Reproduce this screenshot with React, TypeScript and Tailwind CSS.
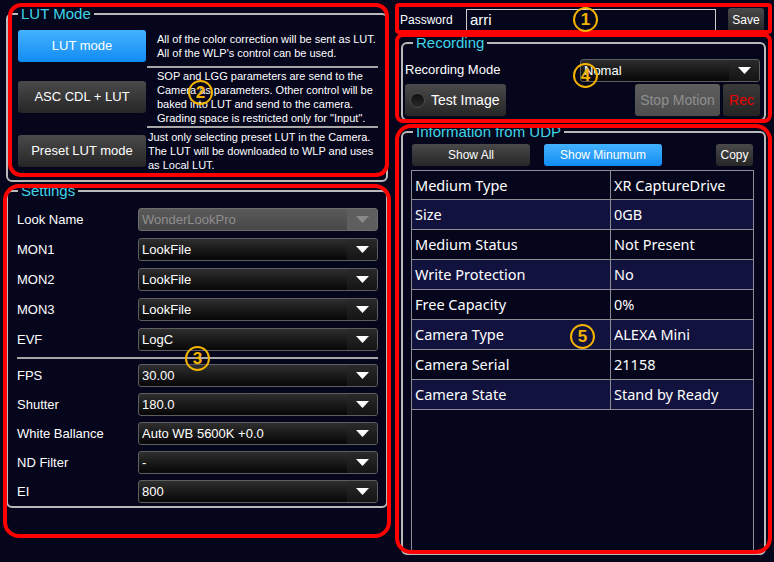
import React from 'react';

const arial = "font-['Liberation_Sans',Arial,sans-serif]";

const Arrow = ({ dim }: { dim?: boolean }) => (
  <svg width="13" height="7" viewBox="0 0 13 7">
    <polygon points="0,0 13,0 6.5,7" fill={dim ? '#8a8a8a' : '#ffffff'} />
  </svg>
);

const Select = ({ value, disabled }: { value: string; disabled?: boolean }) => (
  <div
    className={`flex h-[23px] items-stretch overflow-hidden rounded-[3px] border ${
      disabled
        ? 'border-[#6e6e6e] bg-linear-to-b from-[#5a5a5a] to-[#484848]'
        : 'border-[#5e5e5e] bg-linear-to-b from-[#2f2f2f] to-[#070707]'
    }`}
  >
    <span className={`flex-1 pl-[3px] text-[13px] leading-[21px] ${disabled ? 'text-[#8e8e8e]' : 'text-white'}`}>
      {value}
    </span>
    <span
      className={`flex w-[30px] items-center justify-center ${
        disabled ? 'bg-[#5e5e5e]' : 'bg-linear-to-b from-[#2a2a2a] to-[#141414]'
      }`}
    >
      <Arrow dim={disabled} />
    </span>
  </div>
);

const Btn = ({
  children,
  blue,
  className = '',
}: {
  children: React.ReactNode;
  blue?: boolean;
  className?: string;
}) => (
  <div
    className={`flex items-center justify-center rounded-[3px] text-white ${
      blue
        ? 'bg-linear-to-b from-[#42b2ff] to-[#0c8cf3]'
        : 'bg-linear-to-b from-[#4a4a4a] to-[#262626]'
    } ${className}`}
  >
    {children}
  </div>
);

const Group = ({
  title,
  className = '',
  children,
}: {
  title: string;
  className?: string;
  children: React.ReactNode;
}) => (
  <fieldset className={`rounded-[6px] border-2 border-[#b9b9b9] ${className}`}>
    <legend className="ml-[10px] px-[3px] text-[15px] leading-[18px] text-[#3ed5e6]">{title}</legend>
    {children}
  </fieldset>
);

const Mark = ({ n, className }: { n: string; className: string }) => (
  <div
    className={`pointer-events-none absolute flex h-[25px] w-[25px] items-center justify-center rounded-full border-2 border-[#f3b300] text-[17px] font-bold leading-none text-[#f3b300] ${className}`}
  >
    {n}
  </div>
);

const settingsTop = [
  { label: 'Look Name', value: 'WonderLookPro', disabled: true },
  { label: 'MON1', value: 'LookFile' },
  { label: 'MON2', value: 'LookFile' },
  { label: 'MON3', value: 'LookFile' },
  { label: 'EVF', value: 'LogC' },
];

const settingsBottom = [
  { label: 'FPS', value: '30.00' },
  { label: 'Shutter', value: '180.0' },
  { label: 'White Ballance', value: 'Auto WB 5600K +0.0' },
  { label: 'ND Filter', value: '-' },
  { label: 'EI', value: '800' },
];

const udpRows = [
  ['Medium Type', 'XR CaptureDrive'],
  ['Size', '0GB'],
  ['Medium Status', 'Not Present'],
  ['Write Protection', 'No'],
  ['Free Capacity', '0%'],
  ['Camera Type', 'ALEXA Mini'],
  ['Camera Serial', '21158'],
  ['Camera State', 'Stand by Ready'],
];

export default function App() {
  return (
    <div className={`relative flex h-[562px] w-[774px] overflow-hidden bg-[#05051c] text-white ${arial}`}>
      {/* left column */}
      <div className="w-[394px] shrink-0">
        <Group title="LUT Mode" className="ml-[6px] mt-[5px] w-[382px]">
          <div className="grid grid-cols-[128px_1fr] pb-[6px] pl-[10px] pr-[8px] pt-[3px] text-[11px] leading-[14px]">
            <div className="flex h-[40px] items-center">
              <Btn blue className="h-[32px] w-[128px] text-[13px]">LUT mode</Btn>
            </div>
            <div className="flex items-center whitespace-nowrap pl-[11px]">
              <p>
                All of the color correction will be sent as LUT.
                <br />
                All of the WLP's control can be used.
              </p>
            </div>
            <div />
            <div className="ml-[1px] h-[2px] bg-[#a6a6a6]" />
            <div className="flex h-[58px] items-center">
              <Btn className="h-[32px] w-[128px] text-[13px]">ASC CDL + LUT</Btn>
            </div>
            <div className="flex items-center whitespace-nowrap pl-[11px]">
              <p>
                SOP and LGG parameters are send to the
                <br />
                Camera as parameters. Other control will be
                <br />
                baked into LUT and send to the camera.
                <br />
                Grading space is restricted only for "Input".
              </p>
            </div>
            <div />
            <div className="ml-[1px] h-[2px] bg-[#a6a6a6]" />
            <div className="flex h-[46px] items-center">
              <Btn className="h-[32px] w-[128px] text-[13px]">Preset LUT mode</Btn>
            </div>
            <div className="flex items-center whitespace-nowrap pl-[2px]">
              <p>
                Just only selecting preset LUT in the Camera.
                <br />
                The LUT will be downloaded to WLP and uses
                <br />
                as Local LUT.
              </p>
            </div>
          </div>
        </Group>

        <Group title="Settings" className="ml-[6px] w-[382px]">
          <div className="pb-[3px] pl-[9px] pr-[8px] pt-[8px] text-[13px]">
            <div className="flex flex-col gap-[7px]">
              {settingsTop.map(s => (
                <div key={s.label} className="grid grid-cols-[121px_1fr] items-center">
                  <span>{s.label}</span>
                  <Select value={s.value} disabled={s.disabled} />
                </div>
              ))}
            </div>
            <div className="mb-[5px] mt-[6px] h-[2px] bg-[#a6a6a6]" />
            <div className="flex flex-col gap-[6px]">
              {settingsBottom.map(s => (
                <div key={s.label} className="grid grid-cols-[121px_1fr] items-center">
                  <span>{s.label}</span>
                  <Select value={s.value} />
                </div>
              ))}
            </div>
          </div>
        </Group>
      </div>

      {/* right column */}
      <div className="w-[380px] shrink-0">
        <div className="mt-[8px] flex h-[24px] items-center pl-[6px]">
          <span className="w-[66px] text-[12px]">Password</span>
          <div className="h-[22px] w-[250px] border border-[#cfcfcf] bg-[#05051c] pl-[3px] text-[15px] leading-[20px]">
            arri
          </div>
          <Btn className="ml-[12px] h-[24px] w-[36px] text-[12px]">Save</Btn>
        </div>

        <Group title="Recording" className="ml-[7px] mt-[2px] w-[365px]">
          <div className="pb-[3px] pl-[2px] pr-[4px] pt-[6px]">
            <div className="flex h-[24px] items-center justify-between">
              <span className="text-[13px]">Recording Mode</span>
              <div className="w-[180px]">
                <Select value="Nomal" />
              </div>
            </div>
            <div className="mt-[2px] flex h-[32px]">
              <Btn className="w-[101px] justify-start pl-[5px] text-[14px]">
                <span className="mr-[6px] h-[15px] w-[15px] rounded-full border border-[#4a4a4a] bg-linear-to-b from-[#101010] to-[#2a2a2a]" />
                Test Image
              </Btn>
              <div className="ml-auto flex w-[85px] items-center justify-center rounded-[3px] bg-linear-to-b from-[#5e5e5e] to-[#4e4e4e] text-[14px] text-[#8f8f8f]">
                Stop Motion
              </div>
              <div className="ml-[3px] flex w-[37px] items-center justify-center rounded-[3px] bg-linear-to-b from-[#3a3a3a] to-[#242424] text-[14px] text-[#e80000]">
                Rec
              </div>
            </div>
          </div>
        </Group>

        <Group title="Information from UDP" className="ml-[7px] mt-[2px] w-[365px]">
          <div className="pb-[2px] pt-[3px]">
            <div className="flex h-[22px] text-[12px]">
              <Btn className="ml-[9px] w-[118px]">Show All</Btn>
              <Btn blue className="ml-[14px] w-[118px]">Show Minumum</Btn>
              <Btn className="ml-auto mr-[11px] w-[37px]">Copy</Btn>
            </div>
            <div className="ml-[8px] mr-[10px] mt-[4px] h-[381px] border-x border-[#8d8d95] font-['Noto_Sans','Open_Sans',sans-serif] text-[14.5px]">
              {udpRows.map(([k, v], i) => (
                <div
                  key={k}
                  className={`grid h-[30px] grid-cols-[199px_1fr] border-b border-[#8d8d95] ${i === 0 ? 'border-t' : ''} ${
                    i % 2 === 1 ? 'bg-[#12123f]' : 'bg-[#05051c]'
                  }`}
                >
                  <span className="border-r border-[#8d8d95] pl-[3px] leading-[28px]">{k}</span>
                  <span className="pl-[3px] leading-[28px]">{v}</span>
                </div>
              ))}
            </div>
          </div>
        </Group>
      </div>

      {/* red annotation frames */}
      <div className="pointer-events-none absolute left-[8px] top-[3px] h-[174px] w-[381px] rounded-[13px] border-4 border-[#ff0000]" />
      <div className="pointer-events-none absolute left-[3px] top-[184px] h-[354px] w-[388px] rounded-[16px] border-4 border-[#ff0000]" />
      <div className="pointer-events-none absolute left-[395px] top-[3px] h-[31px] w-[377px] rounded-[4px] border-4 border-[#ff0000]" />
      <div className="pointer-events-none absolute left-[395px] top-[33px] h-[90px] w-[377px] rounded-[8px] border-4 border-[#ff0000]" />
      <div className="pointer-events-none absolute left-[395px] top-[124px] h-[430px] w-[377px] rounded-[16px] border-4 border-[#ff0000]" />

      {/* numbered marks */}
      <Mark n="1" className="left-[573px] top-[7px]" />
      <Mark n="2" className="left-[188px] top-[80px]" />
      <Mark n="3" className="left-[185px] top-[346px]" />
      <Mark n="4" className="left-[573px] top-[63px]" />
      <Mark n="5" className="left-[570px] top-[324px]" />
    </div>
  );
}
